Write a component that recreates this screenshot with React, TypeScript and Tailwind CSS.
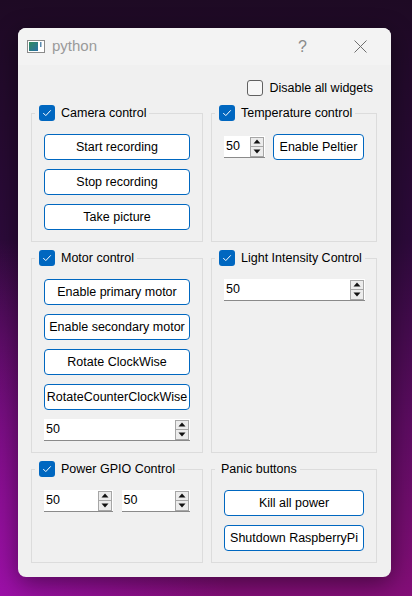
import React from "react";

function Check({ checked = true }: { checked?: boolean }) {
  if (!checked) {
    return <span className="block h-4 w-4 shrink-0 rounded-[3px] border border-[#616161] bg-[#f7f7f7]" />;
  }
  return (
    <span className="flex h-4 w-4 shrink-0 items-center justify-center rounded-[3px] bg-[#0067c0]">
      <svg width="16" height="16" viewBox="0 0 16 16" fill="none">
        <path d="M4.5 8.3 L6.8 10.6 L11.5 5.6" stroke="#fff" strokeWidth="1" strokeLinecap="round" strokeLinejoin="round" />
      </svg>
    </span>
  );
}

function Btn({ label }: { label: string }) {
  return (
    <button className="h-[26px] w-full rounded-[4px] border border-[#0067c0] bg-white text-[12.5px] text-black">
      {label}
    </button>
  );
}

function Spin({ w }: { w: string }) {
  return (
    <div className={`flex h-[22px] items-center border-b border-[#8a8a8a] bg-white ${w}`}>
      <span className="pl-[2px] text-[12.5px] text-black">50</span>
      <div className="ml-auto mr-[1px] flex h-[20px] w-[14px] flex-col border border-[#a6a6a6] bg-[#ececec]">
        <div className="flex flex-1 items-center justify-center border-b border-[#a6a6a6]">
          <svg width="8" height="5" viewBox="0 0 8 5">
            <path d="M0.5 4.5 L4 0.5 L7.5 4.5 Z" fill="#111" />
          </svg>
        </div>
        <div className="flex flex-1 items-center justify-center">
          <svg width="8" height="5" viewBox="0 0 8 5">
            <path d="M0.5 0.5 L4 4.5 L7.5 0.5 Z" fill="#111" />
          </svg>
        </div>
      </div>
    </div>
  );
}

function Group({
  title,
  checkbox = true,
  children,
}: {
  title: string;
  checkbox?: boolean;
  children: React.ReactNode;
}) {
  return (
    <fieldset className="m-0 h-full min-w-0 border border-[#dcdcdc] px-[12px] pb-2 pt-[13px]">
      <legend
        className={`flex h-4 items-center gap-[6px] whitespace-nowrap pr-[3px] text-[12.5px] leading-4 text-black ${
          checkbox ? "ml-[-9px] pl-[4px]" : "ml-[-9px] pl-[6px]"
        }`}
      >
        {checkbox && <Check />}
        <span className="whitespace-nowrap">{title}</span>
      </legend>
      {children}
    </fieldset>
  );
}

export default function App() {
  return (
    <div className="h-[596px] w-[412px] overflow-hidden bg-[radial-gradient(ellipse_55%_60%_at_0%_100%,rgba(160,16,176,0.85)_0%,rgba(150,14,160,0)_100%),linear-gradient(180deg,#1e0a24_0%,#2c0a3a_40%,#5e0c62_72%,#840e78_100%)] pl-[18px] pt-[28px] font-['Liberation_Sans',Arial,sans-serif]">
      <div className="h-[549px] w-[373px] overflow-hidden rounded-lg bg-[#f0f0f0] shadow-[0_6px_24px_rgba(0,0,0,0.45)]">
        {/* title bar */}
        <div className="flex h-[37px] items-center bg-[#f3f3f3] pl-[9px]">
          <svg width="18" height="13" viewBox="0 0 18 13">
            <defs>
              <linearGradient id="ic" x1="0" y1="0" x2="1" y2="1">
                <stop offset="0" stopColor="#2f8a5e" />
                <stop offset="1" stopColor="#2a6fa6" />
              </linearGradient>
            </defs>
            <rect x="0.5" y="0.5" width="17" height="12" fill="#fff" stroke="#8a8a8a" />
            <rect x="2" y="2" width="9" height="9" fill="url(#ic)" />
            <rect x="13" y="2" width="1.5" height="5" fill="#5a8ab0" />
          </svg>
          <span className="ml-[7px] text-[15px] text-[#9a9a9a]">python</span>
          <span className="ml-auto text-[16px] text-[#8a8a8a]">?</span>
          <svg className="ml-[47px] mr-[24px]" width="13" height="13" viewBox="0 0 13 13">
            <path d="M0.5 0.5 L12.5 12.5 M12.5 0.5 L0.5 12.5" stroke="#6e6e6e" strokeWidth="1" />
          </svg>
        </div>

        {/* body */}
        <div className="pl-[13px] pr-[14px] pt-[15px]">
          <div className="flex items-center justify-end gap-[6px] pr-[4px]">
            <Check checked={false} />
            <span className="text-[12.5px] leading-4 text-black">Disable all widgets</span>
          </div>

          <div className="mt-[9px] grid grid-cols-[172px_166px] grid-rows-[137px_203px_102px] gap-x-2 gap-y-2">
            <Group title="Camera control">
              <div className="flex flex-col gap-[9px]">
                <Btn label="Start recording" />
                <Btn label="Stop recording" />
                <Btn label="Take picture" />
              </div>
            </Group>

            <Group title="Temperature control">
              <div className="flex items-center gap-[8px]">
                <Spin w="w-[41px]" />
                <button className="h-[26px] w-[91px] rounded-[4px] border border-[#0067c0] bg-white text-[12.5px] text-black">
                  Enable Peltier
                </button>
              </div>
            </Group>

            <Group title="Motor control">
              <div className="flex flex-col gap-[9px]">
                <Btn label="Enable primary motor" />
                <Btn label="Enable secondary motor" />
                <Btn label="Rotate ClockWise" />
                <Btn label="RotateCounterClockWise" />
                <Spin w="w-full" />
              </div>
            </Group>

            <Group title="Light Intensity Control">
              <Spin w="w-[141px]" />
            </Group>

            <Group title="Power GPIO Control">
              <div className="flex items-center gap-[9px]">
                <Spin w="w-[69px]" />
                <Spin w="w-[69px]" />
              </div>
            </Group>

            <Group title="Panic buttons" checkbox={false}>
              <div className="flex flex-col gap-[9px]">
                <Btn label="Kill all power" />
                <Btn label="Shutdown RaspberryPi" />
              </div>
            </Group>
          </div>
        </div>
      </div>
    </div>
  );
}
